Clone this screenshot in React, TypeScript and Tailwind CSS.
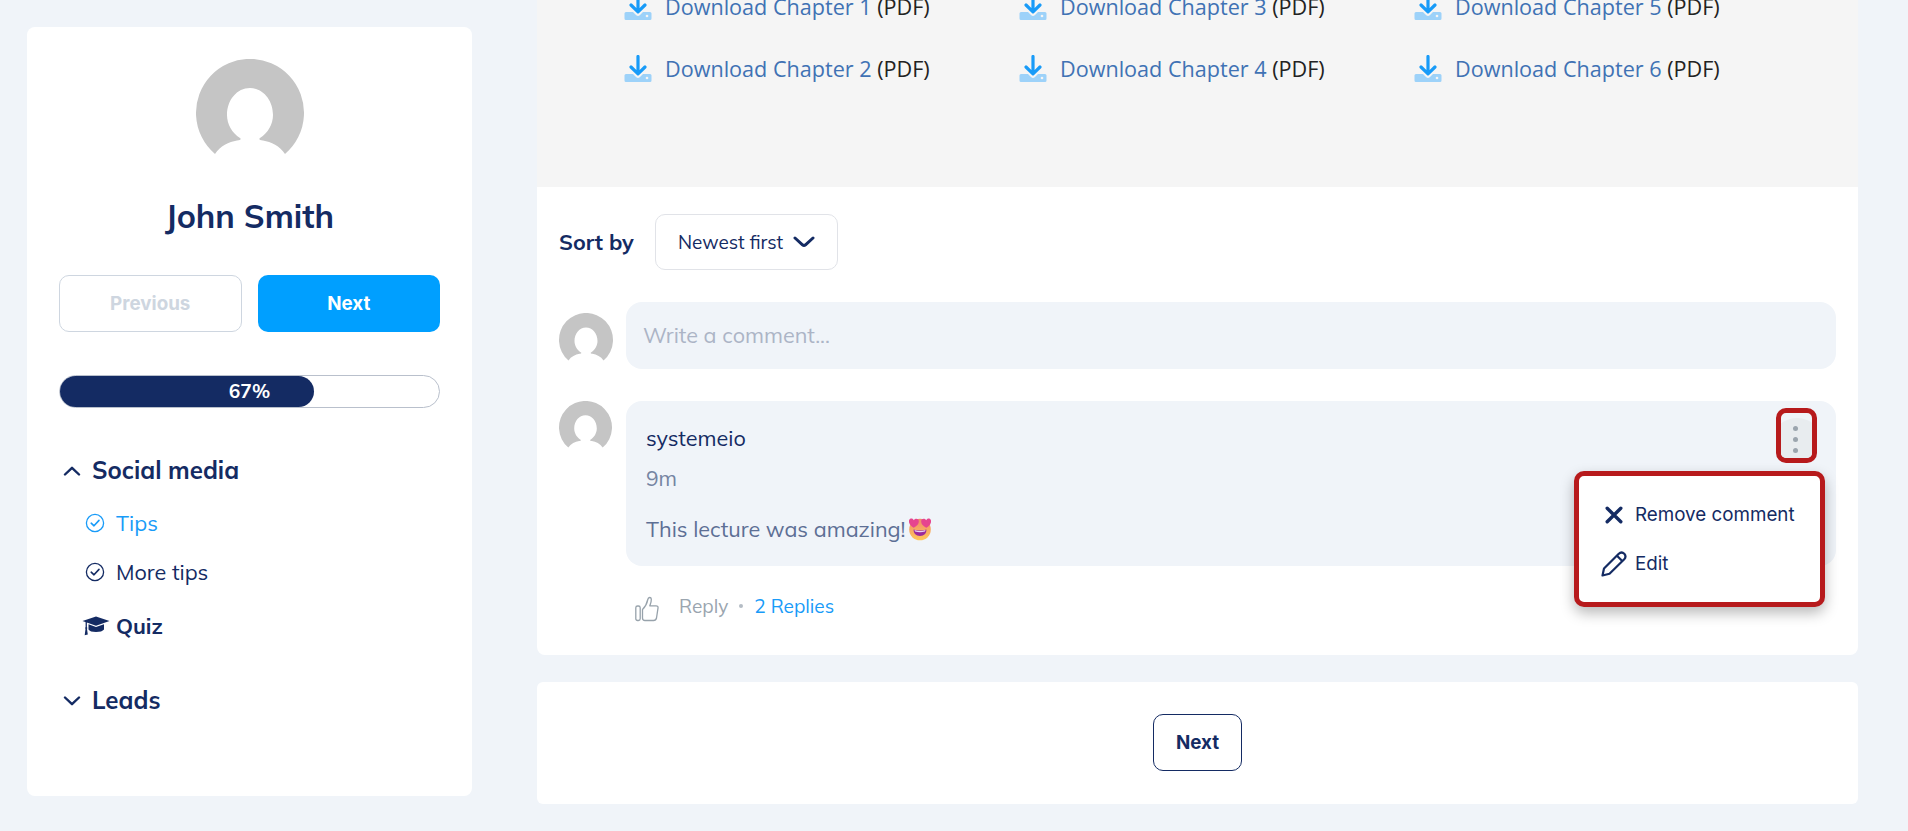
import { ReactNode } from "react";
import clsx from "clsx";

type IconProps = { className?: string };

const chapters = [1, 3, 5, 2, 4, 6];

const AvatarIcon = ({ className }: IconProps) => (
  <svg viewBox="0 0 108 108" className={className} fill="#c5c5c5">
    <path d="M19 95A54 54 0 1 1 89 95C84 87 75 83 67 81.500C63.500 81 62.500 80 64 79C72 74 77 65 77 56C77 41 67 29 54 29S31 41 31 56C31 65 36 74 44 79C45.500 80 44.500 81 41 81.500C33 83 24 87 19 95Z" />
  </svg>
);

const DownloadIcon = ({ className }: IconProps) => (
  <svg viewBox="0 0 28 28" className={className} fill="none">
    <path d="M2 19H9L12 22Q14 24 16 22L19 19H26Q27.500 19 27.500 20.500V25.500Q27.500 27 26 27H2Q.5 27 .5 25.500V20.500Q.5 19 2 19Z" fill="#9dd2f9" />
    <circle cx="23" cy="23" r="1.3" fill="#f5f5f5" />
    <path d="M14 1.500V18.500M7 12L14 18.800L21 12" stroke="#189bf8" strokeWidth="3.200" strokeLinecap="round" strokeLinejoin="round" />
  </svg>
);

const ChevronIcon = ({ className }: IconProps) => (
  <svg viewBox="0 0 18 10" className={className} fill="none" stroke="currentColor" strokeWidth="2.400" strokeLinecap="round" strokeLinejoin="round">
    <path d="M2 1.500L9 8.200L16 1.500" />
  </svg>
);

const CheckIcon = ({ className }: IconProps) => (
  <svg viewBox="0 0 20 20" className={className} fill="none" stroke="currentColor" strokeLinecap="round" strokeLinejoin="round">
    <circle cx="10" cy="10" r="8.600" strokeWidth="1.300" />
    <path d="M6.200 10.200L9 12.800L14 7.400" strokeWidth="1.600" />
  </svg>
);

const GraduationIcon = ({ className }: IconProps) => (
  <svg viewBox="0 0 28 20" className={className} fill="currentColor">
    <path d="M14 .5L27.500 5L14 9.800L.5 5Z" />
    <path d="M6.500 8.200L14 11L22 8.200V13.500Q20 16 14 16T6.500 13.500Z" />
    <path d="M3.600 5.500H4.900V11Q5.800 12 5 13L5.800 18.500L2.700 19.200L3.500 13Q2.700 12 3.600 11Z" />
  </svg>
);

const ThumbIcon = ({ className }: IconProps) => (
  <svg viewBox="0 0 24 26" className={className} fill="none" stroke="#97a2ab" strokeWidth="1.300" strokeLinejoin="round">
    <rect x=".8" y="10" width="4.400" height="14.500" rx="1.800" />
    <path d="M7.500 13.500C10.500 10.500 12 7.500 12.800 3.500C13.300 1 16 .8 16.300 3.200C16.500 5.500 15.500 8 14.800 9.800H21Q23.400 9.800 23 12.200L21.500 22Q21 24.500 18.500 24.500H10Q7.500 24.500 7.500 22Z" />
  </svg>
);

const HeartEyesIcon = ({ className }: IconProps) => (
  <svg viewBox="0 0 24 24" className={className}>
    <defs>
      <linearGradient id="face" x1="0" y1="0" x2="0" y2="1">
        <stop offset="0" stopColor="#ef8a6c" />
        <stop offset="1" stopColor="#ffc75a" />
      </linearGradient>
    </defs>
    <circle cx="12" cy="12.500" r="10.800" fill="url(#face)" />
    <path d="M5.500 10.800C2 8.500 .5 6 1 3.500C1.700 1 4.800 1 5.800 3.200C7.500 1 10.500 1.500 10.800 4C11 7 8.500 9.500 5.500 10.800Z" fill="#e6458f" />
    <path d="M18.500 10.800C15.500 9.500 13 7 13.200 4C13.500 1.500 16.500 1 18.200 3.200C19.200 1 22.300 1 23 3.500C23.500 6 22 8.500 18.500 10.800Z" fill="#e6458f" />
    <path d="M5.500 12.500Q12 14.500 18.500 12.500Q18.500 19 12 19T5.500 12.500Z" fill="#9c2a9b" />
    <path d="M6.500 13Q12 15 17.500 13L17 14.500Q12 16 7 14.500Z" fill="#e9d3f2" />
  </svg>
);

const CrossIcon = ({ className }: IconProps) => (
  <svg viewBox="0 0 18 18" className={className} fill="none" stroke="currentColor" strokeWidth="3.400" strokeLinecap="round">
    <path d="M2.200 2.200L15.800 15.800M15.800 2.200L2.200 15.800" />
  </svg>
);

const PencilIcon = ({ className }: IconProps) => (
  <svg viewBox="0 0 26 26" className={className} fill="none" stroke="currentColor" strokeWidth="2.200" strokeLinejoin="round">
    <path d="M1.500 24.500L3 17.500L17.500 3Q20.500 .2 23.300 2.700Q25.800 5.500 23 8.500L8.500 22.800Z" />
    <path d="M16 4.800L21.200 10" />
  </svg>
);

const SectionTitle = ({ children, open }: { children: ReactNode; open?: boolean }) => (
  <div className="flex h-8 items-center gap-[11px] pl-1 text-[24.100px] font-bold">
    <ChevronIcon className={clsx("mt-[2px] h-[10px] w-[18px]", open && "rotate-180")} />
    <span>{children}</span>
  </div>
);

const Sidebar = () => (
  <aside className="flex h-[769px] w-[445px] shrink-0 flex-col rounded-[8px] bg-white px-8 pt-8">
    <AvatarIcon className="size-[108px] self-center" />
    <h1 className="mt-[25px] text-center text-[32.400px] leading-[48px] font-bold">John Smith</h1>
    <div className="mt-[35px] grid grid-cols-2 gap-4 font-['Inter',sans-serif] text-[18.800px] font-bold">
      <button className="h-[57px] rounded-[10px] border border-[#ced6e0] pt-[2px] text-[#ced6e0]">Previous</button>
      <button className="h-[57px] rounded-[10px] bg-[#009fff] pt-[2px] text-white">Next</button>
    </div>
    <div className="relative mt-[43px] h-[33px] rounded-full border border-[#b9c0cc]">
      <div className="h-full rounded-full bg-[#142b63]" style={{ width: "67%" }} />
      <span className="absolute inset-0 flex items-center justify-center text-[19.200px] font-bold text-white">67%</span>
    </div>
    <div className="mt-[46px]">
      <SectionTitle open>Social media</SectionTitle>
    </div>
    <div className="mt-[19px] flex h-9 items-center gap-[11px] pl-[26px] text-[21.600px] text-[#189bf8]">
      <CheckIcon className="size-5" />
      <span>Tips</span>
    </div>
    <div className="mt-[13px] flex h-9 items-center gap-[11px] pl-[26px] text-[21.600px]">
      <CheckIcon className="size-5" />
      <span>More tips</span>
    </div>
    <div className="mt-[18px] flex h-9 items-center gap-[6px] pl-[23px] text-[21.600px] font-bold">
      <GraduationIcon className="h-5 w-7" />
      <span>Quiz</span>
    </div>
    <div className="mt-[40px]">
      <SectionTitle>Leads</SectionTitle>
    </div>
  </aside>
);

const CommentMenu = () => (
  <div className="absolute top-[70px] right-[11px] flex h-[136px] w-[251px] flex-col rounded-[10px] border-[5px] border-[#b71a1c] bg-white pt-[20px] pl-[22px] font-['Inter',sans-serif] text-[18.800px] shadow-[0_6px_14px_rgba(0,0,0,0.28)]">
    <div className="flex h-[37px] items-center">
      <CrossIcon className="mr-[12px] ml-[4px] size-[18px]" />
      <span className="pt-[2px]">Remove comment</span>
    </div>
    <div className="mt-[12px] flex h-[37px] items-center">
      <PencilIcon className="mr-[8px] size-[26px]" />
      <span className="pt-[2px]">Edit</span>
    </div>
  </div>
);

const Comment = () => (
  <div className="mt-8 flex items-start">
    <AvatarIcon className="size-[53px]" />
    <div className="ml-[14px] flex-1">
      <div className="relative h-[165px] rounded-[16px] bg-[#f0f4f9] pt-[21px] pl-5 text-[21.600px]">
        <p className="leading-8">systemeio</p>
        <p className="mt-2 text-[21px] leading-8 text-[#7584a2]">9m</p>
        <p className="mt-[19px] flex items-center leading-8 text-[#5d6f95]">
          <span>This lecture was amazing!</span>
          <HeartEyesIcon className="ml-[2px] size-[24px]" />
        </p>
        <button className="absolute top-[7px] right-[19px] flex h-[55px] w-[41px] items-center justify-center overflow-hidden rounded-[10px] border-[5px] border-[#b71a1c]">
          <span className="absolute top-[5px] size-[52px] shrink-0 rounded-full bg-[#e8ecef]" />
          <span className="relative mt-[8px] mr-[2px] flex flex-col gap-[5.500px]">
            <i className="size-[5.500px] rounded-full bg-[#9ba5ae]" />
            <i className="size-[5.500px] rounded-full bg-[#9ba5ae]" />
            <i className="size-[5.500px] rounded-full bg-[#9ba5ae]" />
          </span>
        </button>
        <CommentMenu />
      </div>
      <div className="mt-[24px] flex h-8 items-center pl-[9px] text-[19px] text-[#9aa5af]">
        <ThumbIcon className="mt-[6px] h-[26px] w-[24px]" />
        <span className="ml-5">Reply</span>
        <i className="mx-[11px] size-1 rounded-full bg-[#b4bcc5]" />
        <span className="text-[#189bf8]">2 Replies</span>
      </div>
    </div>
  </div>
);

export default function App() {
  return (
    <div className="flex h-[831px] w-[1908px] overflow-hidden bg-[#f0f4f9] pl-[27px] font-['Mulish','Lato',sans-serif] text-[#142b63]">
      <div className="pt-[27px]">
        <Sidebar />
      </div>
      <main className="ml-[65px] w-[1321px]">
        <section className="flex h-[187px] flex-col justify-end bg-[#f5f5f5] pb-[87px] pl-[87px] font-['Open_Sans',sans-serif] text-[21.600px] text-[#222]">
          <div className="grid grid-cols-[395px_395px_395px]">
            {chapters.map((n) => (
              <div key={n} className="flex h-[62px] items-center">
                <DownloadIcon className="mr-[13px] size-7" />
                <span>
                  <a className="text-[#4072b4]">Download Chapter {n}</a> (PDF)
                </span>
              </div>
            ))}
          </div>
        </section>
        <section className="h-[468px] rounded-b-[8px] bg-white px-[22px] pt-[27px]">
          <div className="flex items-center">
            <span className="w-[96px] text-[21.600px] font-bold">Sort by</span>
            <button className="flex h-[56px] w-[183px] items-center rounded-[10px] border border-[#e1e3e8] pl-[22px] text-[18.900px]">
              <span className="w-[115px] text-left">Newest first</span>
              <svg viewBox="0 0 22 12" className="h-3 w-[22px]" fill="none" stroke="currentColor" strokeWidth="3" strokeLinecap="round" strokeLinejoin="round">
                <path d="M2 2L9.500 8.800Q11 10 12.500 8.800L20 2" />
              </svg>
            </button>
          </div>
          <div className="mt-[32px] flex">
            <AvatarIcon className="mt-[11px] size-[54px]" />
            <div className="ml-[13px] flex h-[67px] flex-1 items-center rounded-[16px] bg-[#f0f4f9] pl-[17px] text-[21.600px] text-[#acb4c6]">
              Write a comment...
            </div>
          </div>
          <Comment />
        </section>
        <section className="mt-[27px] flex h-[122px] items-center justify-center rounded-[6px] bg-white pb-[1px]">
          <button className="h-[57px] w-[89px] rounded-[10px] border border-[#142b63] pt-[2px] font-['Inter',sans-serif] text-[18.800px] font-bold">Next</button>
        </section>
      </main>
    </div>
  );
}
